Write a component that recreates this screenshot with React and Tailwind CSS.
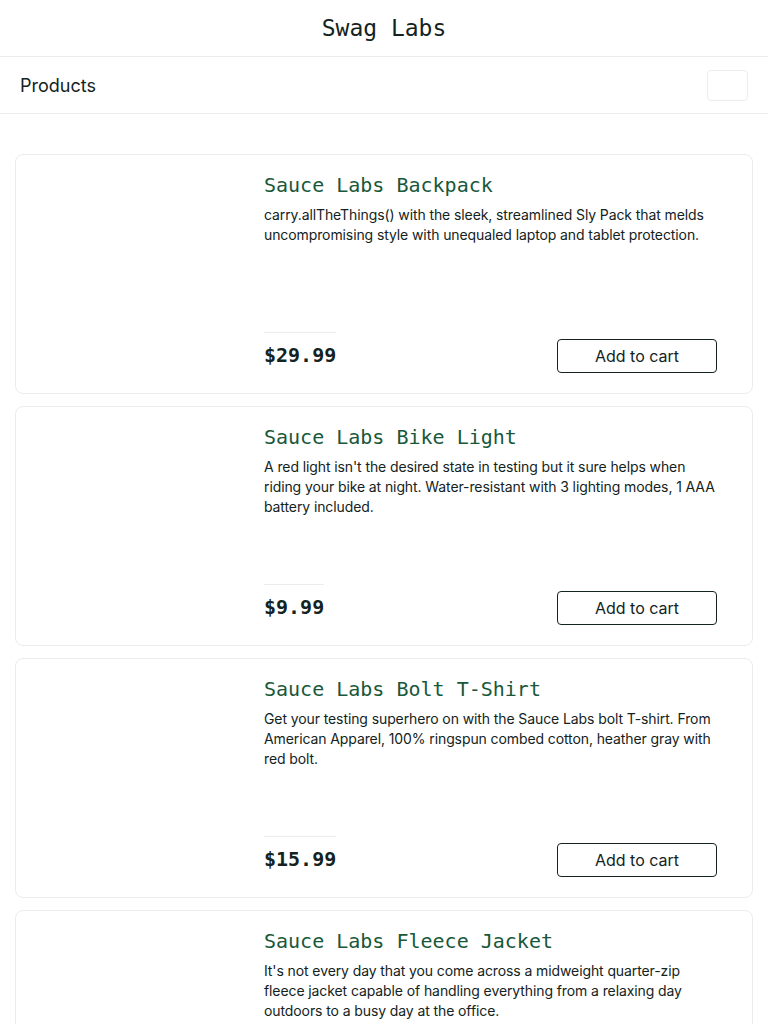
import React from 'react'

// description lines are split the way the shot wraps them
const products = [
  {
    name: 'Sauce Labs Backpack',
    desc: [
      'carry.allTheThings() with the sleek, streamlined Sly Pack that melds',
      'uncompromising style with unequaled laptop and tablet protection.',
    ],
    price: '$29.99',
  },
  {
    name: 'Sauce Labs Bike Light',
    desc: [
      "A red light isn't the desired state in testing but it sure helps when",
      'riding your bike at night. Water-resistant with 3 lighting modes, 1 AAA',
      'battery included.',
    ],
    price: '$9.99',
  },
  {
    name: 'Sauce Labs Bolt T-Shirt',
    desc: [
      'Get your testing superhero on with the Sauce Labs bolt T-shirt. From',
      'American Apparel, 100% ringspun combed cotton, heather gray with',
      'red bolt.',
    ],
    price: '$15.99',
  },
  {
    name: 'Sauce Labs Fleece Jacket',
    desc: [
      "It's not every day that you come across a midweight quarter-zip",
      'fleece jacket capable of handling everything from a relaxing day',
      'outdoors to a busy day at the office.',
    ],
    price: '$49.99',
  },
]

const sans = "font-['Inter','Noto_Sans',sans-serif]"
const mono = "font-['DejaVu_Sans_Mono','Liberation_Mono',monospace]"

// one inventory row
const ProductCard = ({ item }) => {
  return (
    <div className="flex h-[240px] shrink-0 rounded-[8px] border border-[#ececec] bg-white">
      {/* image slot, empty in the shot */}
      <div className="w-[248px] shrink-0" />
      <div className="flex flex-1 flex-col justify-between pt-[18px] pr-[35px] pb-[20px]">
        <div>
          <div className={`${mono} text-[20px] leading-[24px] text-[#18583a]`}>{item.name}</div>
          <div className={`${sans} mt-[8px] text-[14px] leading-[20px] tracking-[-0.1px] text-[#132322]`}>
            {item.desc.map((line) => (
              <span key={line} className="block whitespace-nowrap">
                {line}
              </span>
            ))}
          </div>
        </div>
        <div className="flex items-end justify-between">
          <div className={`${mono} border-t border-[#ececec] pt-[10px] pb-[6px] text-[20px] font-semibold leading-[24px] text-[#132322]`}>
            {item.price}
          </div>
          <button
            type="button"
            className={`${sans} h-[34px] w-[160px] rounded-[4px] border border-[#132322] bg-white text-[16px] text-[#132322]`}
          >
            Add to cart
          </button>
        </div>
      </div>
    </div>
  )
}

const App = () => {
  return (
    <div className="min-h-screen bg-white">
      {/* top header */}
      <div className="flex h-[57px] items-center justify-center border-b border-[#ececec]">
        <span className={`${mono} text-[23px] text-[#132322]`}>Swag Labs</span>
      </div>

      {/* secondary bar */}
      <div className="flex h-[57px] items-center justify-between border-b border-[#ececec] px-[20px]">
        <span className={`${sans} text-[18px] text-[#132322]`}>Products</span>
        <div className="h-[31px] w-[41px] rounded-[4px] border border-[#ececec]" />
      </div>

      {/* product list */}
      <div className="flex flex-col gap-[12px] px-[15px] pt-[40px] pb-[20px]">
        {products.map((p) => (
          <ProductCard key={p.name} item={p} />
        ))}
      </div>
    </div>
  )
}

export default App
